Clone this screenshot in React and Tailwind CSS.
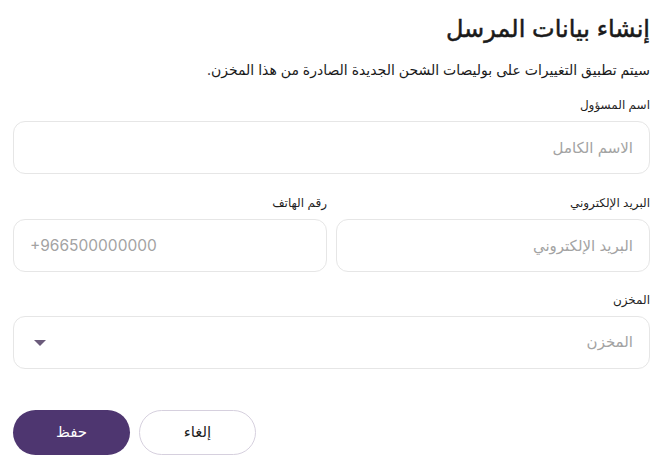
const Field = ({ label, placeholder, ltr }) => (
  <div className="flex flex-col">
    <label className="text-[12px] leading-4 text-[#1f1f1f] mb-2 h-4">{label}</label>
    <input
      className={`h-[53px] w-full rounded-xl border border-[#e6e6e6] bg-white px-4 text-[#333] placeholder:text-[#a3a3a3] outline-none ${ltr ? "text-left text-[15.5px]" : "text-right text-[15px]"}`}
      dir={ltr ? "ltr" : "rtl"}
      placeholder={placeholder}
    />
  </div>
);

const App = () => {
  return (
    <div
      dir="rtl"
      className="w-[664px] h-[471px] bg-white px-[14px] pl-[13px] pt-[9px] font-['Inter','DejaVu_Sans',sans-serif] text-[#1a1a1a]"
    >
      <h1 className="text-[24px] leading-[40px] font-normal [-webkit-text-stroke:0.5px_#1a1a1a]">إنشاء بيانات المرسل</h1>
      <p className="text-[14px] leading-6 mt-[9px]">
        سيتم تطبيق التغييرات على بوليصات الشحن الجديدة الصادرة من هذا المخزن.
      </p>
      <div className="mt-[15px] flex flex-col gap-[20px]">
        <Field label="اسم المسؤول" placeholder="الاسم الكامل" />
        <div className="grid grid-cols-2 gap-[9px] mt-px">
          <Field label="البريد الإلكتروني" placeholder="البريد الإلكتروني" />
          <Field label="رقم الهاتف" placeholder="+966500000000" ltr />
        </div>
        <div className="flex flex-col">
          <label className="text-[12px] leading-4 text-[#1f1f1f] mb-2 h-4">المخزن</label>
          <div className="h-[53px] rounded-xl border border-[#e6e6e6] bg-white pr-4 pl-5 flex items-center justify-between">
            <span className="text-[15px] text-[#a3a3a3]">المخزن</span>
            <svg width="12" height="6" viewBox="0 0 12 6">
              <path d="M0 0 L12 0 L6 6 Z" fill="#6b5b7b" />
            </svg>
          </div>
        </div>
      </div>
      <div className="mt-[41px] flex justify-end gap-[9px]" dir="ltr">
        <button className="h-[45px] w-[117px] rounded-full bg-[#4e3670] text-white text-[15px]">حفظ</button>
        <button className="h-[45px] w-[117px] rounded-full border border-[#d6d0de] bg-white text-[#1f1f1f] text-[15px]">إلغاء</button>
        <div className="flex-1" />
      </div>
    </div>
  );
};

export default App;
